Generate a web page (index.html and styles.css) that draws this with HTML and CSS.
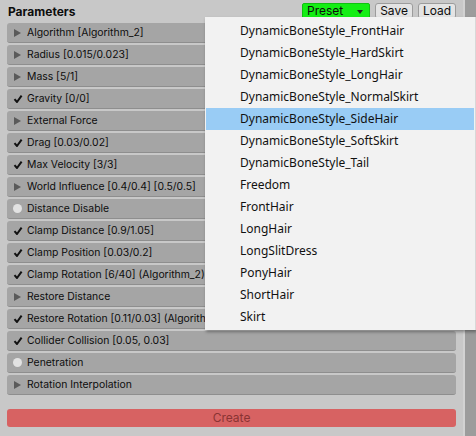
FILE: index.html
```html
<!DOCTYPE html>
<html>
<head>
<meta charset="utf-8">
<link rel="stylesheet" href="styles.css">
</head>
<body>
<div class="page">
  <div class="main">
    <div class="header">
      <div class="title">Parameters</div>
      <div class="tools">
        <div class="preset">Preset<span class="caret"></span></div>
        <div class="btn">Save</div>
        <div class="btn">Load</div>
      </div>
    </div>
    <div class="rows">
      <div class="row"><span class="ic tri"></span>Algorithm [Algorithm_2]</div>
      <div class="row"><span class="ic tri"></span>Radius [0.015/0.023]</div>
      <div class="row"><span class="ic tri"></span>Mass [5/1]</div>
      <div class="row"><span class="ic"><svg class="chk" viewBox="0 0 10 10"><path d="M1.5 5.2 L4 8 L8.6 1.6" /></svg></span>Gravity [0/0]</div>
      <div class="row"><span class="ic tri"></span>External Force</div>
      <div class="row"><span class="ic"><svg class="chk" viewBox="0 0 10 10"><path d="M1.5 5.2 L4 8 L8.6 1.6" /></svg></span>Drag [0.03/0.02]</div>
      <div class="row"><span class="ic"><svg class="chk" viewBox="0 0 10 10"><path d="M1.5 5.2 L4 8 L8.6 1.6" /></svg></span>Max Velocity [3/3]</div>
      <div class="row"><span class="ic tri"></span>World Influence [0.4/0.4] [0.5/0.5]</div>
      <div class="row"><span class="ic"><span class="dot"></span></span>Distance Disable</div>
      <div class="row"><span class="ic"><svg class="chk" viewBox="0 0 10 10"><path d="M1.5 5.2 L4 8 L8.6 1.6" /></svg></span>Clamp Distance [0.9/1.05]</div>
      <div class="row"><span class="ic"><svg class="chk" viewBox="0 0 10 10"><path d="M1.5 5.2 L4 8 L8.6 1.6" /></svg></span>Clamp Position [0.03/0.2]</div>
      <div class="row"><span class="ic"><svg class="chk" viewBox="0 0 10 10"><path d="M1.5 5.2 L4 8 L8.6 1.6" /></svg></span>Clamp Rotation [6/40] (Algorithm_2)</div>
      <div class="row"><span class="ic tri"></span>Restore Distance</div>
      <div class="row"><span class="ic"><svg class="chk" viewBox="0 0 10 10"><path d="M1.5 5.2 L4 8 L8.6 1.6" /></svg></span>Restore Rotation [0.11/0.03] (Algorithm_2)</div>
      <div class="row"><span class="ic"><svg class="chk" viewBox="0 0 10 10"><path d="M1.5 5.2 L4 8 L8.6 1.6" /></svg></span>Collider Collision [0.05, 0.03]</div>
      <div class="row"><span class="ic"><span class="dot"></span></span>Penetration</div>
      <div class="row"><span class="ic tri"></span>Rotation Interpolation</div>
    </div>
    <div class="create">Create</div>
  </div>
  <div class="scrollbar"></div>
  <div class="menu">
    <div class="item">DynamicBoneStyle_FrontHair</div>
    <div class="item">DynamicBoneStyle_HardSkirt</div>
    <div class="item">DynamicBoneStyle_LongHair</div>
    <div class="item">DynamicBoneStyle_NormalSkirt</div>
    <div class="item sel">DynamicBoneStyle_SideHair</div>
    <div class="item">DynamicBoneStyle_SoftSkirt</div>
    <div class="item">DynamicBoneStyle_Tail</div>
    <div class="item">Freedom</div>
    <div class="item">FrontHair</div>
    <div class="item">LongHair</div>
    <div class="item">LongSlitDress</div>
    <div class="item">PonyHair</div>
    <div class="item">ShortHair</div>
    <div class="item">Skirt</div>
  </div>
</div>
</body>
</html>
```

FILE: styles.css
```css
html, body {
  margin: 0;
  padding: 0;
}
body {
  width: 476px;
  height: 436px;
  overflow: hidden;
  background: #c8c8c8;
  font-family: Inter, "Noto Sans", "Liberation Sans", sans-serif;
  font-size: 10.4px;
  color: #0d0d0d;
}
.page {
  position: relative;
  display: flex;
  height: 436px;
}
.main {
  width: 451px;
  padding: 0 4px 0 7px;
}
.header {
  height: 23px;
  display: flex;
  align-items: flex-start;
  justify-content: space-between;
}
.title {
  font-weight: bold;
  font-size: 12px;
  padding: 5px 0 0 1px;
  line-height: 14px;
}
.tools {
  display: flex;
  gap: 5px;
  padding-top: 3px;
}
.preset {
  width: 62px;
  height: 14px;
  background: #14ee14;
  border: 1px solid #10c010;
  border-radius: 2px;
  font-size: 12px;
  line-height: 14px;
  padding-left: 4px;
  position: relative;
}
.caret {
  position: absolute;
  right: 6px;
  top: 6px;
  width: 0;
  height: 0;
  border-left: 3px solid transparent;
  border-right: 3px solid transparent;
  border-top: 4px solid #222;
}
.btn {
  width: 36px;
  height: 14px;
  background: #e4e4e4;
  border: 1px solid #9c9c9c;
  border-radius: 3px;
  font-size: 12px;
  line-height: 14px;
  text-align: center;
}
.rows {
  display: flex;
  flex-direction: column;
  gap: 2px;
}
.row {
  height: 19px;
  background: #a5a5a5;
  border-bottom: 1px solid #8e8e8e;
  border-radius: 3px;
  display: flex;
  align-items: center;
  line-height: 19px;
}
.ic {
  width: 20px;
  height: 19px;
  display: flex;
  align-items: center;
  justify-content: center;
  flex: none;
  padding-left: 1px;
  box-sizing: border-box;
}
.tri::before {
  content: "";
  width: 0;
  height: 0;
  border-top: 4px solid transparent;
  border-bottom: 4px solid transparent;
  border-left: 7px solid #5a5a5a;
}
.chk {
  width: 10px;
  height: 10px;
}
.chk path {
  fill: none;
  stroke: #111;
  stroke-width: 2;
  stroke-linejoin: round;
}
.dot {
  width: 9px;
  height: 9px;
  border-radius: 50%;
  background: #e2e2e2;
}
.create {
  margin-top: 14px;
  height: 18px;
  line-height: 18px;
  background: #d76262;
  border-radius: 3px;
  text-align: center;
  font-size: 12px;
  color: #8a3434;
}
.scrollbar {
  width: 11px;
  margin-left: 3px;
  border-left: 2px solid #d2d2d2;
  background: #9c9c9c;
}
.menu {
  position: absolute;
  left: 205px;
  top: 17px;
  width: 268px;
  padding: 3px 1px 2px 1px;
  background: #f2f2f2;
  border-right: 1px solid #d8d8d8;
  box-shadow: 1px 2px 3px rgba(0, 0, 0, 0.35);
  font-family: "Noto Sans", "Liberation Sans", sans-serif;
  font-size: 12px;
  color: #111;
}
.item {
  height: 22px;
  line-height: 22px;
  padding-left: 34px;
}
.item.sel {
  background: #99ccf5;
}
```
